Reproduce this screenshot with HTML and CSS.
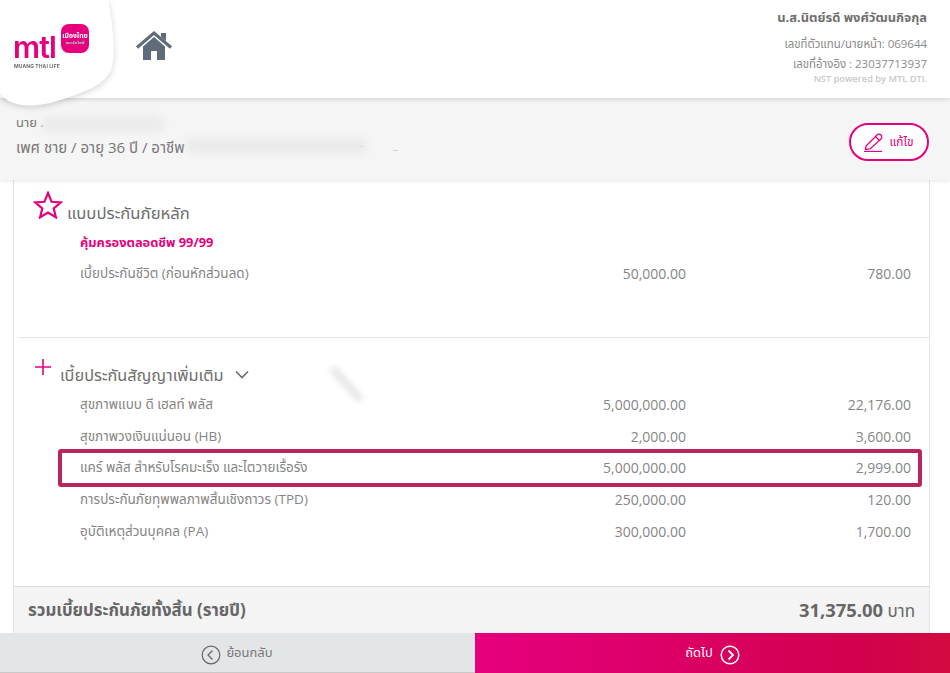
FILE: index.html
```html
<!DOCTYPE html>
<html lang="th">
<head>
<meta charset="utf-8">
<title>MTL</title>
<link rel="stylesheet" href="styles.css">
</head>
<body>
<div class="page">
  <header class="topbar">
    <div class="logo-blob">
      <svg class="blob-shape" width="122" height="110" viewBox="0 0 122 110">
        <path d="M0 0H108C112 20 115 45 113 62C111 76 103 82 92 88C74 96 55 103 38 105C20 107 8 103 0 94Z" fill="#fff"/>
      </svg>
      <span class="mtl">mtl</span>
      <span class="mtl-sub">MUANG THAI LIFE</span>
      <span class="badge"><span class="badge-top">เมืองไทย</span><span class="badge-bot">สมาร์ทไลฟ์</span></span>
    </div>
    <svg class="home" width="36" height="30" viewBox="0 0 36 30">
      <path d="M7 15.500V29H15V20H21V29H29V15.500L18 6Z" fill="#5f6b78"/>
      <path d="M1 16.500L18 2L35 16.500" fill="none" stroke="#5f6b78" stroke-width="3"/>
      <path d="M25 2H30V10L25 6Z" fill="#5f6b78"/>
    </svg>
    <div class="agent">
      <div class="agent-name">น.ส.นิตย์รดี พงศ์วัฒนกิจกุล</div>
      <div class="agent-line">เลขที่ตัวแทน/นายหน้า: 069644</div>
      <div class="agent-line">เลขที่อ้างอิง : 23037713937</div>
      <div class="agent-note">NST powered by MTL DTI.</div>
    </div>
  </header>

  <section class="client">
    <div class="client-text">
      <div class="client-name">นาย .</div>
      <div class="client-info">เพศ ชาย / อายุ 36 ปี / อาชีพ</div>
      <i class="smudge smudge-a"></i>
      <i class="smudge smudge-b"></i>
      <i class="speck speck-a"></i>
      <i class="speck speck-b"></i>
    </div>
    <button class="edit">
      <svg width="20" height="20" viewBox="0 0 20 20">
        <path d="M2 14L13 3C14 2 16 2 17 3C18 4 18 6 17 7L6 17L1.500 17.500Z" fill="none" stroke="#e6007e" stroke-width="1.300"/>
        <path d="M11.500 4.500L15.500 8.500" stroke="#e6007e" stroke-width="1.300"/>
        <path d="M0 19.500H18" stroke="#e6007e" stroke-width="1.300"/>
      </svg>
      <span>แก้ไข</span>
    </button>
  </section>

  <main class="content">
    <section class="main-plan">
      <div class="sec-head star-head">
        <svg class="star" width="30" height="28" viewBox="0 0 30 28">
          <path d="M15 2L18.600 10.800L27.700 11.500L20.700 17.500L22.900 26.300L15 21.500L7.100 26.300L9.300 17.500L2.300 11.500L11.400 10.800Z" fill="none" stroke="#e6007e" stroke-width="2.200"/>
        </svg>
        <h2>แบบประกันภัยหลัก</h2>
      </div>
      <div class="plan-name">คุ้มครองตลอดชีพ 99/99</div>
      <div class="row"><span class="label">เบี้ยประกันชีวิต (ก่อนหักส่วนลด)</span><span class="num">50,000.00</span><span class="num2">780.00</span></div>
    </section>
    <section class="riders">
      <div class="sec-head plus-head">
        <svg class="plus" width="16" height="16" viewBox="0 0 16 16">
          <path d="M0 8H16M8 0V16" stroke="#e6007e" stroke-width="1.600"/>
        </svg>
        <h2>เบี้ยประกันสัญญาเพิ่มเติม</h2>
        <svg class="chev" width="14" height="9" viewBox="0 0 14 9"><path d="M1 1.500L7 7.500L13 1.500" fill="none" stroke="#666d74" stroke-width="1.600"/></svg>
      </div>
      <div class="row"><span class="label">สุขภาพแบบ ดี เฮลท์ พลัส</span><span class="num">5,000,000.00</span><span class="num2">22,176.00</span></div>
      <div class="row"><span class="label">สุขภาพวงเงินแน่นอน (HB)</span><span class="num">2,000.00</span><span class="num2">3,600.00</span></div>
      <div class="row"><span class="label">แคร์ พลัส สำหรับโรคมะเร็ง และไตวายเรื้อรัง</span><span class="num">5,000,000.00</span><span class="num2">2,999.00</span></div>
      <div class="row"><span class="label">การประกันภัยทุพพลภาพสิ้นเชิงถาวร (TPD)</span><span class="num">250,000.00</span><span class="num2">120.00</span></div>
      <div class="row"><span class="label">อุบัติเหตุส่วนบุคคล (PA)</span><span class="num">300,000.00</span><span class="num2">1,700.00</span></div>
      <i class="highlight"></i>
      <i class="smudge smudge-c"></i>
    </section>
  </main>

  <section class="total">
    <strong>รวมเบี้ยประกันภัยทั้งสิ้น (รายปี)</strong>
    <span class="total-val"><b>31,375.00</b> บาท</span>
  </section>

  <footer class="actions">
    <div class="back">
      <svg class="act-icon" width="20" height="20" viewBox="0 0 20 20"><circle cx="10" cy="10" r="8.800" fill="none" stroke="#666" stroke-width="1.200"/><path d="M11.500 5.500L7 10L11.500 14.500" fill="none" stroke="#666" stroke-width="1.300"/></svg>
      <span>ย้อนกลับ</span>
    </div>
    <div class="next">
      <span>ถัดไป</span>
      <svg class="act-icon" width="20" height="20" viewBox="0 0 20 20"><circle cx="10" cy="10" r="8.800" fill="none" stroke="#fff" stroke-width="1.500"/><path d="M8.500 5.500L13 10L8.500 14.500" fill="none" stroke="#fff" stroke-width="1.800"/></svg>
    </div>
  </footer>
</div>
</body>
</html>
```
FILE: styles.css
```css
* { box-sizing: border-box; }
html, body { margin: 0; padding: 0; }
body { font-family: "Open Sans", "Noto Sans", "Noto Sans Thai", sans-serif; color: #6e6e6e; background: #fff; }
.page { width: 950px; height: 673px; display: flex; flex-direction: column; overflow: hidden; position: relative; }

.topbar { height: 98px; flex: none; background: #fff; box-shadow: 0 1px 5px rgba(0,0,0,.16); display: flex; align-items: flex-start; position: relative; z-index: 3; }
.logo-blob { position: absolute; left: 0; top: 0; width: 122px; height: 110px; filter: drop-shadow(0 2px 3px rgba(0,0,0,.16)); }
.blob-shape { position: absolute; left: 0; top: 0; }
.mtl { position: absolute; left: 13px; top: 32px; font: 600 30px/30px "Inter", sans-serif; letter-spacing: -.8px; color: #e6007e; }
.mtl-sub { position: absolute; left: 14px; top: 63px; font: 700 5px/6px "Inter", sans-serif; letter-spacing: .1px; color: #6b6b6b; white-space: nowrap; }
.badge { position: absolute; left: 61px; top: 24px; width: 28px; height: 29px; border-radius: 8px; background: #e6007e; display: flex; flex-direction: column; align-items: center; padding-top: 7px; }
.badge-top { font-size: 6.800px; line-height: 9px; font-weight: 700; color: #fff; white-space: nowrap; }
.badge-bot { font-size: 4.200px; line-height: 5px; font-weight: 700; color: #9fd8d0; white-space: nowrap; }
.home { margin: 31px 0 0 136px; flex: none; }
.agent { margin-left: auto; padding: 6px 23px 0 0; text-align: right; }
.agent-name { font-size: 12.900px; line-height: 22px; font-weight: 700; color: #6f6f6f; margin-bottom: 6px; }
.agent-line { font-size: 11.450px; line-height: 20px; color: #8a8a8a; }
.agent-note { font-size: 9.250px; line-height: 10px; font-weight: 600; color: #c8c8c8; }

.client { height: 82px; flex: none; background: #f5f5f5; box-shadow: 0 1px 4px rgba(0,0,0,.1); display: flex; justify-content: space-between; align-items: flex-start; padding: 14px 21px 0 16px; position: relative; z-index: 2; }
.client-text { position: relative; }
.client-name { font-size: 13px; line-height: 20px; color: #777; }
.client-info { font-size: 15px; line-height: 30px; color: #777; }
.smudge { position: absolute; display: block; background: #ebebeb; filter: blur(3px); border-radius: 10px; }
.smudge-a { left: 26px; top: 4px; width: 122px; height: 17px; }
.smudge-b { left: 170px; top: 25px; width: 182px; height: 17px; }
.smudge-c { left: 325px; top: 24px; width: 7px; height: 44px; background: #e3e3e3; transform: rotate(-42deg); }
.speck { position: absolute; display: block; height: 1px; background: #d6d6d6; }
.speck-a { left: 345px; top: 34px; width: 2px; }
.speck-b { left: 377px; top: 38px; width: 5px; }
.edit { margin-top: 11px; width: 80px; height: 38px; border: 2px solid #e6007e; border-radius: 19px; background: #fff; color: #e6007e; font: 400 12px "Open Sans", "Noto Sans", "Noto Sans Thai", sans-serif; display: flex; align-items: center; justify-content: center; gap: 5px; padding: 0; }

.content { flex: 1; min-height: 0; margin: 0 20px 0 13px; border-left: 1px solid #e4e4e4; border-right: 1px solid #e4e4e4; border-bottom: 1px solid #ddd; background: #fff; padding-left: 4px; }
.main-plan { height: 158px; border-bottom: 1px solid #e4e4e4; padding-top: 11px; }
.sec-head { display: flex; align-items: flex-end; }
.sec-head h2 { margin: 0; font-weight: 400; color: #6e6e6e; }
.star-head { height: 36px; padding-left: 15px; gap: 4px; }
.star-head h2 { font-size: 16.700px; line-height: 28px; }
.star { margin-bottom: 8px; }
.plan-name { margin-left: 62px; margin-top: 3px; font-size: 12.850px; line-height: 24px; font-weight: 700; color: #e6007e; }
.riders { position: relative; padding-top: 17px; }
.plus-head { height: 32px; padding-left: 17px; margin-bottom: 2px; }
.plus { margin-bottom: 12px; }
.plus-head h2 { font-size: 16.300px; margin-left: 9px; line-height: 24px; }
.chev { margin: 0 0 8px 11px; }
.row { height: 31.600px; display: grid; grid-template-columns: 1fr 130px 225px; align-items: center; padding: 0 18px 0 62px; font-size: 14px; color: #858585; }
.label { font-size: 13.500px; padding-top: 1px; }
.main-plan .row { margin-top: 4px; }
.num, .num2 { text-align: right; }
.highlight { position: absolute; left: 40px; top: 111px; width: 864px; height: 38px; border: 4px solid #b9265f; border-radius: 3px; }

.total { height: 46px; flex: none; margin: 0 20px 0 13px; border-left: 1px solid #e4e4e4; border-right: 1px solid #e4e4e4; background: #f4f4f4; display: flex; justify-content: space-between; align-items: center; padding: 1px 14px 0; }
.total strong { font-size: 16.850px; color: #666; }
.total-val { font-size: 17px; color: #666; }
.total-val b { font-size: 18.400px; }

.actions { height: 40px; flex: none; display: grid; grid-template-columns: 475px 475px; position: relative; z-index: 2; }
.back { background: #e3e6e6; border-bottom: 1px solid #c9c9c9; display: flex; align-items: center; justify-content: center; gap: 5px; font-size: 13px; color: #777; padding-right: 1px; }
.next { background: linear-gradient(90deg, #e6007e 0%, #d2004e 80%, #d20a40 100%); display: flex; align-items: center; justify-content: center; gap: 7px; font-size: 13px; color: #fff; }
.act-icon { margin-top: 4px; }
```
